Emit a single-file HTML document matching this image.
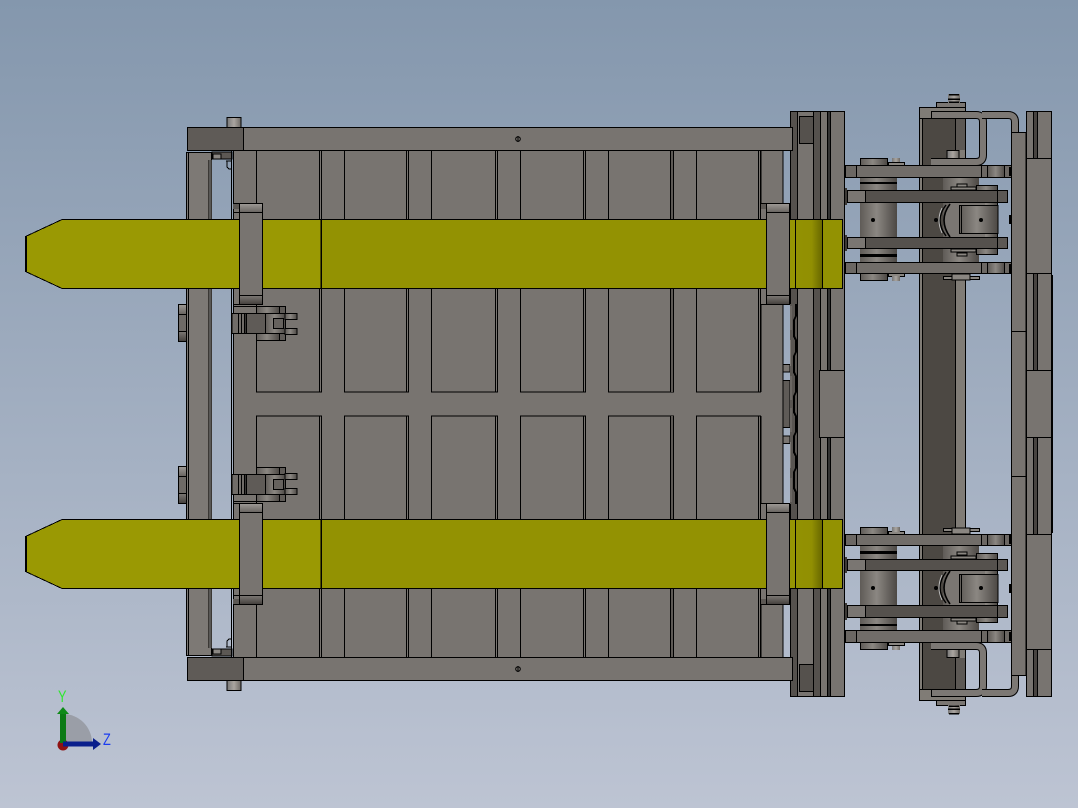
<!DOCTYPE html>
<html><head><meta charset="utf-8"><title>CAD assembly view</title>
<style>
html,body{margin:0;padding:0;width:1078px;height:808px;overflow:hidden;background:#a0acbf}
svg{display:block}
.k{stroke:#000;stroke-width:1}
.c{shape-rendering:crispEdges}
.t{font-family:"Liberation Sans",sans-serif;font-size:17px}
</style></head><body>
<svg width="1078" height="808" viewBox="0 0 1078 808" xmlns="http://www.w3.org/2000/svg">
<defs>
<clipPath id="top"><rect x="0" y="0" width="1078" height="404"/></clipPath>
<linearGradient id="bg" x1="0" y1="0" x2="0" y2="1"><stop offset="0" stop-color="#8497ad"/><stop offset="1" stop-color="#bdc4d3"/></linearGradient>
<linearGradient id="cyl" x1="0" y1="0" x2="1" y2="0"><stop offset="0" stop-color="#5f5b57"/><stop offset=".45" stop-color="#8b8782"/><stop offset=".85" stop-color="#5d5955"/><stop offset="1" stop-color="#4c4844"/></linearGradient>
<linearGradient id="pin" x1="0" y1="0" x2="1" y2="0"><stop offset="0" stop-color="#777"/><stop offset=".5" stop-color="#aaa5a0"/><stop offset="1" stop-color="#6d6964"/></linearGradient>
<linearGradient id="capL" x1="0" y1="0" x2="0" y2="1"><stop offset="0" stop-color="#9c9894"/><stop offset="1" stop-color="#6a6662"/></linearGradient>
<linearGradient id="capD" x1="0" y1="0" x2="0" y2="1"><stop offset="0" stop-color="#7a7672"/><stop offset="1" stop-color="#45413e"/></linearGradient>
<linearGradient id="fk" x1="0" y1="0" x2="1" y2="0"><stop offset="0" stop-color="#939202"/><stop offset=".6" stop-color="#918f02"/><stop offset="1" stop-color="#676600"/></linearGradient>
<g id="h" class="c" clip-path="url(#top)">
  <!-- left frame -->
  <rect x="186.5" y="152.5" width="25" height="253" fill="#7d7975" class="k"/>
  <line x1="188.5" y1="152" x2="188.5" y2="405" class="k"/>
  <rect x="208" y="160" width="4" height="246" fill="#3b3835"/>
  <rect x="209.500" y="160" width="1" height="246" fill="#777"/>
  <!-- small top-left details -->
  <rect x="212" y="152" width="20" height="7" fill="#5c5854" class="k"/>
  <rect x="213" y="154" width="8" height="5" fill="#8b8783" class="k"/>
  <path d="M226 161H232M227 161V167L229 169H231" fill="none" class="k"/>
  <!-- plate -->
  <rect x="233.500" y="150.500" width="549.500" height="255" fill="#787470" class="k"/>
  <line x1="231.500" y1="150" x2="231.500" y2="406" class="k"/>
  <rect x="256.500" y="150.500" width="65" height="241.500" fill="#787470" class="k"/><line x1="319.500" y1="150" x2="319.500" y2="392" class="k"/>
  <rect x="344.500" y="150.500" width="64" height="241.500" fill="#787470" class="k"/><line x1="406.500" y1="150" x2="406.500" y2="392" class="k"/>
  <rect x="431.500" y="150.500" width="66" height="241.500" fill="#787470" class="k"/><line x1="495.500" y1="150" x2="495.500" y2="392" class="k"/>
  <rect x="520.500" y="150.500" width="65" height="241.500" fill="#787470" class="k"/><line x1="583.500" y1="150" x2="583.500" y2="392" class="k"/>
  <rect x="608.500" y="150.500" width="65" height="241.500" fill="#787470" class="k"/><rect x="671" y="151" width="2" height="241" fill="#5d5955"/><line x1="670.500" y1="150" x2="670.500" y2="392" class="k"/>
  <rect x="696.500" y="150.500" width="64" height="241.500" fill="#787470" class="k"/><line x1="758.500" y1="150" x2="758.500" y2="392" class="k"/>
  <!-- clamp-side steps -->
  <path d="M233 203.500H256.500V150M233 212.500H239M233 304.500H256" fill="none" class="k"/>
  <rect x="233" y="204" width="6" height="5" fill="#5c5854"/>
  <path d="M783 203.500H761V150M783 304.500H761V392" fill="none" class="k"/>
  <rect x="761" y="204" width="6" height="5" fill="#5c5854"/>
  <!-- mechanism -->
  <rect x="233.500" y="306.500" width="23" height="7" fill="#787470" class="k"/>
  <rect x="232" y="313.500" width="14" height="20" fill="#706c68" class="k"/>
  <path d="M238.500 313V333M241.500 313V333M244.500 313V333" class="k"/>
  <rect x="246.500" y="313.500" width="19" height="20" fill="#5f5b57" class="k"/>
  <rect x="256.500" y="306.500" width="23" height="7" fill="url(#cyl)" class="k"/>
  <rect x="279.500" y="306.500" width="6" height="7" fill="#5f5b57" class="k"/>
  <rect x="256.500" y="333.500" width="23" height="7" fill="url(#cyl)" class="k"/>
  <rect x="279.500" y="333.500" width="6" height="7" fill="#5f5b57" class="k"/>
  <rect x="265.500" y="313.500" width="20" height="20" fill="url(#cyl)" class="k"/>
  <rect x="285" y="313.500" width="12" height="6" fill="url(#cyl)" class="k"/>
  <rect x="285" y="328.500" width="12" height="6" fill="url(#cyl)" class="k"/>
  <rect x="273.500" y="318.500" width="10" height="10" fill="#66625e" class="k"/>
  <!-- right gap bits -->
  <rect x="783" y="364.500" width="7" height="7.500" fill="#787470" class="k"/>
  <rect x="783" y="380.500" width="7" height="26" fill="#5f5b57" class="k"/>
  <!-- right upright -->
  <rect x="790.500" y="111.500" width="54" height="294" fill="#787470" class="k"/>
  <rect x="791" y="112" width="6" height="293" fill="#55514d"/>
  <rect x="813" y="112" width="7" height="293" fill="#55514d"/>
  <rect x="827" y="112" width="3" height="293" fill="#333"/>
  <path d="M797.500 111V405M813.500 111V405M820.500 111V405M827.500 111V405M830.500 111V405" class="k"/>
  <rect x="799.500" y="116.500" width="14" height="27" fill="#55514d" class="k"/>
  <rect x="819.500" y="370.500" width="25" height="40" fill="#787470" class="k"/>
  <!-- chain -->
  <rect x="790" y="304" width="7" height="102" fill="#595551"/>
  <path d="M796 304V316L794 320V336L796 340V352L794 356V372L796 376V392L794 396V406" fill="none" stroke="#000" stroke-width="2"/>
  <path d="M791 306V330M790.500 340V366M791 376V400" stroke="#7a7672" stroke-width="1"/>
  <!-- top bar -->
  <rect x="187.500" y="127.500" width="605" height="23" fill="#787470" class="k"/>
  <rect x="187.500" y="127.500" width="56" height="23" fill="#5f5b57" class="k"/>
  <rect x="227" y="117.500" width="14" height="10" fill="url(#pin)" class="k"/>
  <g shape-rendering="auto"><circle cx="518" cy="139" r="2.300" fill="none" class="k"/><line x1="518" y1="136" x2="518" y2="142" class="k"/></g>
  <!-- center column -->
  <rect x="919.500" y="107.500" width="46" height="298" fill="#807c76" class="k"/>
  <rect x="922" y="118" width="33" height="288" fill="#4c4843"/>
  <path d="M922.500 118V406M955.500 118V406" class="k"/>
  <rect x="956" y="118" width="9" height="32" fill="#5c5854"/>
  <line x1="919" y1="118.500" x2="966" y2="118.500" class="k"/>
  <rect x="936.500" y="102.500" width="29" height="5" fill="#7a7672" class="k"/>
  <rect x="948" y="94" width="12" height="9" fill="url(#pin)"/>
  <path d="M949 94.500H959M948 99H960M949 102H959" stroke="#000" stroke-width="1.500"/>
  <rect x="947" y="150.500" width="12" height="8" fill="url(#pin)" class="k"/>
  <!-- cylinder 1 -->
  <rect x="860.500" y="158.500" width="27" height="8" fill="url(#cyl)" class="k"/>
  <rect x="860" y="177" width="37" height="86" fill="url(#cyl)"/>
  <rect x="860.500" y="264" width="27" height="16.500" fill="url(#cyl)" class="k"/>
  <rect x="860" y="182" width="37" height="2" fill="#000"/>
  <rect x="860" y="254" width="37" height="3" fill="#000"/>
  <rect x="888.500" y="162.500" width="16" height="3" fill="#8a8681" class="k"/>
  <rect x="892" y="158" width="8" height="4" fill="url(#pin)"/>
  <rect x="888.500" y="273.500" width="16" height="3" fill="#8a8681" class="k"/>
  <rect x="892" y="276" width="8" height="5" fill="url(#pin)"/>
  <circle cx="873" cy="220" r="2" fill="#000" shape-rendering="auto"/>
  <!-- roller 2 -->
  <rect x="943" y="177" width="36" height="86" fill="url(#cyl)"/>
  <rect x="976.500" y="185.500" width="21" height="69" fill="url(#cyl)" class="k"/>
  <path d="M951 203Q939 220 951 237H985V203Z" fill="#7a7672" shape-rendering="auto"/>
  <g shape-rendering="auto" fill="none"><path d="M950 204Q938 220 950 237" stroke="#000" stroke-width="1.600"/><path d="M946 205Q934 220 946 236" stroke="#000" stroke-width="1.400"/><path d="M942 208Q936 220 942 233" stroke="#bbb" stroke-width="1"/></g>
  <circle cx="936" cy="220" r="2" fill="#000" shape-rendering="auto"/>
  <rect x="959.500" y="205.500" width="38.500" height="28" fill="url(#cyl)" class="k"/>
  <line x1="961.500" y1="205" x2="961.500" y2="234" class="k"/>
  <circle cx="981" cy="220" r="2" fill="#000" shape-rendering="auto"/>
  <rect x="943.500" y="276.500" width="36" height="3" fill="#8a8681" class="k"/>
  <rect x="952" y="274" width="18" height="6" fill="#8a8681" class="k"/>
  <rect x="951" y="187" width="25" height="3" fill="#8a8681" class="k"/>
  <rect x="957" y="184" width="10" height="3" fill="#8a8681" class="k"/>
  <rect x="957" y="253" width="10" height="3" fill="#8a8681" class="k"/>
  <rect x="951" y="249" width="25" height="3" fill="#8a8681" class="k"/>
  <!-- cross bars: outer pair -->
  <g>
    <rect x="845.500" y="165.500" width="166" height="12" fill="#6b6763" class="k"/>
    <rect x="856.500" y="165.500" width="125" height="12" fill="#716d69" class="k"/>
    <rect x="988" y="166" width="17" height="11" fill="url(#cyl)"/>
    <path d="M987.500 165V178M1004.500 165V178" class="k"/>
    <rect x="1009" y="167" width="2" height="9" fill="#000"/>
  </g>
  <g>
    <rect x="845.500" y="262.500" width="166" height="11" fill="#6b6763" class="k"/>
    <rect x="856.500" y="262.500" width="125" height="11" fill="#716d69" class="k"/>
    <rect x="988" y="263" width="17" height="10" fill="url(#cyl)"/>
    <path d="M987.500 262V274M1004.500 262V274" class="k"/>
    <rect x="1009" y="264" width="2" height="9" fill="#000"/>
  </g>
  <rect x="1009" y="215" width="2" height="9" fill="#000"/>
  <!-- cross bars: inner pair -->
  <rect x="847.500" y="190.500" width="160" height="12" fill="#7a7672" class="k"/>
  <rect x="865.500" y="190.500" width="132" height="12" fill="#55514d" class="k"/>
  <rect x="998" y="191" width="9" height="11" fill="#5c5854"/>
  <rect x="845" y="188" width="2" height="17" fill="#3c3936"/>
  <rect x="847.500" y="237.500" width="160" height="11" fill="#7a7672" class="k"/>
  <rect x="865.500" y="237.500" width="132" height="11" fill="#55514d" class="k"/>
  <rect x="998" y="238" width="9" height="10" fill="#5c5854"/>
  <rect x="845" y="235" width="2" height="16" fill="#3c3936"/>
  <!-- U brackets -->
  <path d="M931 115H976Q983 115 983 122V155Q983 162 976 162H931" fill="none" stroke="#000" stroke-width="8" shape-rendering="auto"/>
  <path d="M931 115H976Q983 115 983 122V155Q983 162 976 162H931" fill="none" stroke="#7c7874" stroke-width="6" shape-rendering="auto"/>
  <path d="M982 115H1008Q1015 115 1015 122V133" fill="none" stroke="#000" stroke-width="8" shape-rendering="auto"/>
  <path d="M982 115H1008Q1015 115 1015 122V133" fill="none" stroke="#7c7874" stroke-width="6" shape-rendering="auto"/>
  <path d="M931.500 111.500V118.500" class="k"/>
  <!-- right columns -->
  <rect x="1011.500" y="132.500" width="14.500" height="273" fill="#787470" class="k"/>
  <line x1="1011" y1="331.500" x2="1026" y2="331.500" class="k"/>
  <rect x="1026.500" y="111.500" width="25" height="294" fill="#787470" class="k"/>
  <rect x="1033" y="112" width="4" height="293" fill="#474340"/>
  <path d="M1033.500 111V405M1037.500 111V405M1026.500 111V405" class="k"/>
  <rect x="1052" y="275" width="1" height="131" fill="#000"/>
  <rect x="1026.500" y="158.500" width="25" height="115" fill="#787470" class="k"/>
  <rect x="1026.500" y="370.500" width="25" height="36" fill="#787470" class="k"/>
</g>
</defs>
<rect width="1078" height="808" fill="url(#bg)"/>
<use href="#h"/>
<use href="#h" transform="matrix(1 0 0 -1 0 808)"/>

<g class="c">
  <!-- left pads -->
  <g>
    <rect x="178.500" y="304.500" width="8" height="37" fill="#6e6a66" class="k"/>
    <rect x="179" y="305" width="7" height="9" fill="url(#capL)"/>
    <rect x="179" y="332" width="7" height="9" fill="url(#capD)"/>
    <path d="M179 314.500H186M179 331.500H186" class="k"/>
  </g>
  <g transform="translate(0 162)">
    <rect x="178.500" y="304.500" width="8" height="37" fill="#6e6a66" class="k"/>
    <rect x="179" y="305" width="7" height="9" fill="url(#capL)"/>
    <rect x="179" y="332" width="7" height="9" fill="url(#capD)"/>
    <path d="M179 314.500H186M179 331.500H186" class="k"/>
  </g>
  <!-- forks -->
  <g>
    <polygon points="25.500,236.500 62,219.500 321,219.500 321,288.500 62,288.500 25.500,271.500" fill="#9a9903" stroke="#000" stroke-width="1"/>
    <rect x="321.500" y="219.500" width="468" height="69" fill="#939202" class="k"/>
    <rect x="789.500" y="219.500" width="6" height="69" fill="#969503" class="k"/>
    <rect x="795.500" y="219.500" width="27" height="69" fill="url(#fk)" class="k"/>
    <rect x="822.500" y="219.500" width="20" height="69" fill="#939202" class="k"/>
    <rect x="25" y="236" width="2" height="36" fill="#000"/>
    <rect x="239.500" y="203.500" width="23" height="101" fill="#787470" class="k"/>
    <rect x="240" y="204" width="22" height="8" fill="url(#capL)"/>
    <rect x="240" y="296" width="22" height="8" fill="url(#capD)"/>
    <path d="M239 212.500H263M239 295.500H263" class="k"/>
    <rect x="766.500" y="203.500" width="23" height="101" fill="#787470" class="k"/>
    <rect x="767" y="204" width="22" height="8" fill="url(#capL)"/>
    <rect x="767" y="296" width="22" height="8" fill="url(#capD)"/>
    <path d="M766 212.500H790M766 295.500H790" class="k"/>
  </g>
  <g transform="translate(0 300)">
    <polygon points="25.500,236.500 62,219.500 321,219.500 321,288.500 62,288.500 25.500,271.500" fill="#9a9903" stroke="#000" stroke-width="1"/>
    <rect x="321.500" y="219.500" width="468" height="69" fill="#939202" class="k"/>
    <rect x="789.500" y="219.500" width="6" height="69" fill="#969503" class="k"/>
    <rect x="795.500" y="219.500" width="27" height="69" fill="url(#fk)" class="k"/>
    <rect x="822.500" y="219.500" width="20" height="69" fill="#939202" class="k"/>
    <rect x="25" y="236" width="2" height="36" fill="#000"/>
    <rect x="239.500" y="203.500" width="23" height="101" fill="#787470" class="k"/>
    <rect x="240" y="204" width="22" height="8" fill="url(#capL)"/>
    <rect x="240" y="296" width="22" height="8" fill="url(#capD)"/>
    <path d="M239 212.500H263M239 295.500H263" class="k"/>
    <rect x="766.500" y="203.500" width="23" height="101" fill="#787470" class="k"/>
    <rect x="767" y="204" width="22" height="8" fill="url(#capL)"/>
    <rect x="767" y="296" width="22" height="8" fill="url(#capD)"/>
    <path d="M766 212.500H790M766 295.500H790" class="k"/>
  </g>
</g>

<!-- triad -->
<path d="M63 742V714A29 29 0 0 1 92 742Z" fill="#9a9ea7"/>
<circle cx="63" cy="745" r="5.500" fill="#8f1212"/>
<rect x="60" y="713" width="6" height="30" fill="#0c7a14"/>
<polygon points="63,707 69,714 57,714" fill="#0f8a18"/>
<rect x="63" y="741.500" width="31" height="5" fill="#0a1f8c"/>
<polygon points="101,744 93,738 93,750" fill="#0a1f8c"/>
<text transform="translate(58 702) scale(.75 1)" class="t" fill="#2fe82f">Y</text>
<text transform="translate(103 745) scale(.75 1)" class="t" fill="#1a3cf0">Z</text>
</svg>
</body></html>
